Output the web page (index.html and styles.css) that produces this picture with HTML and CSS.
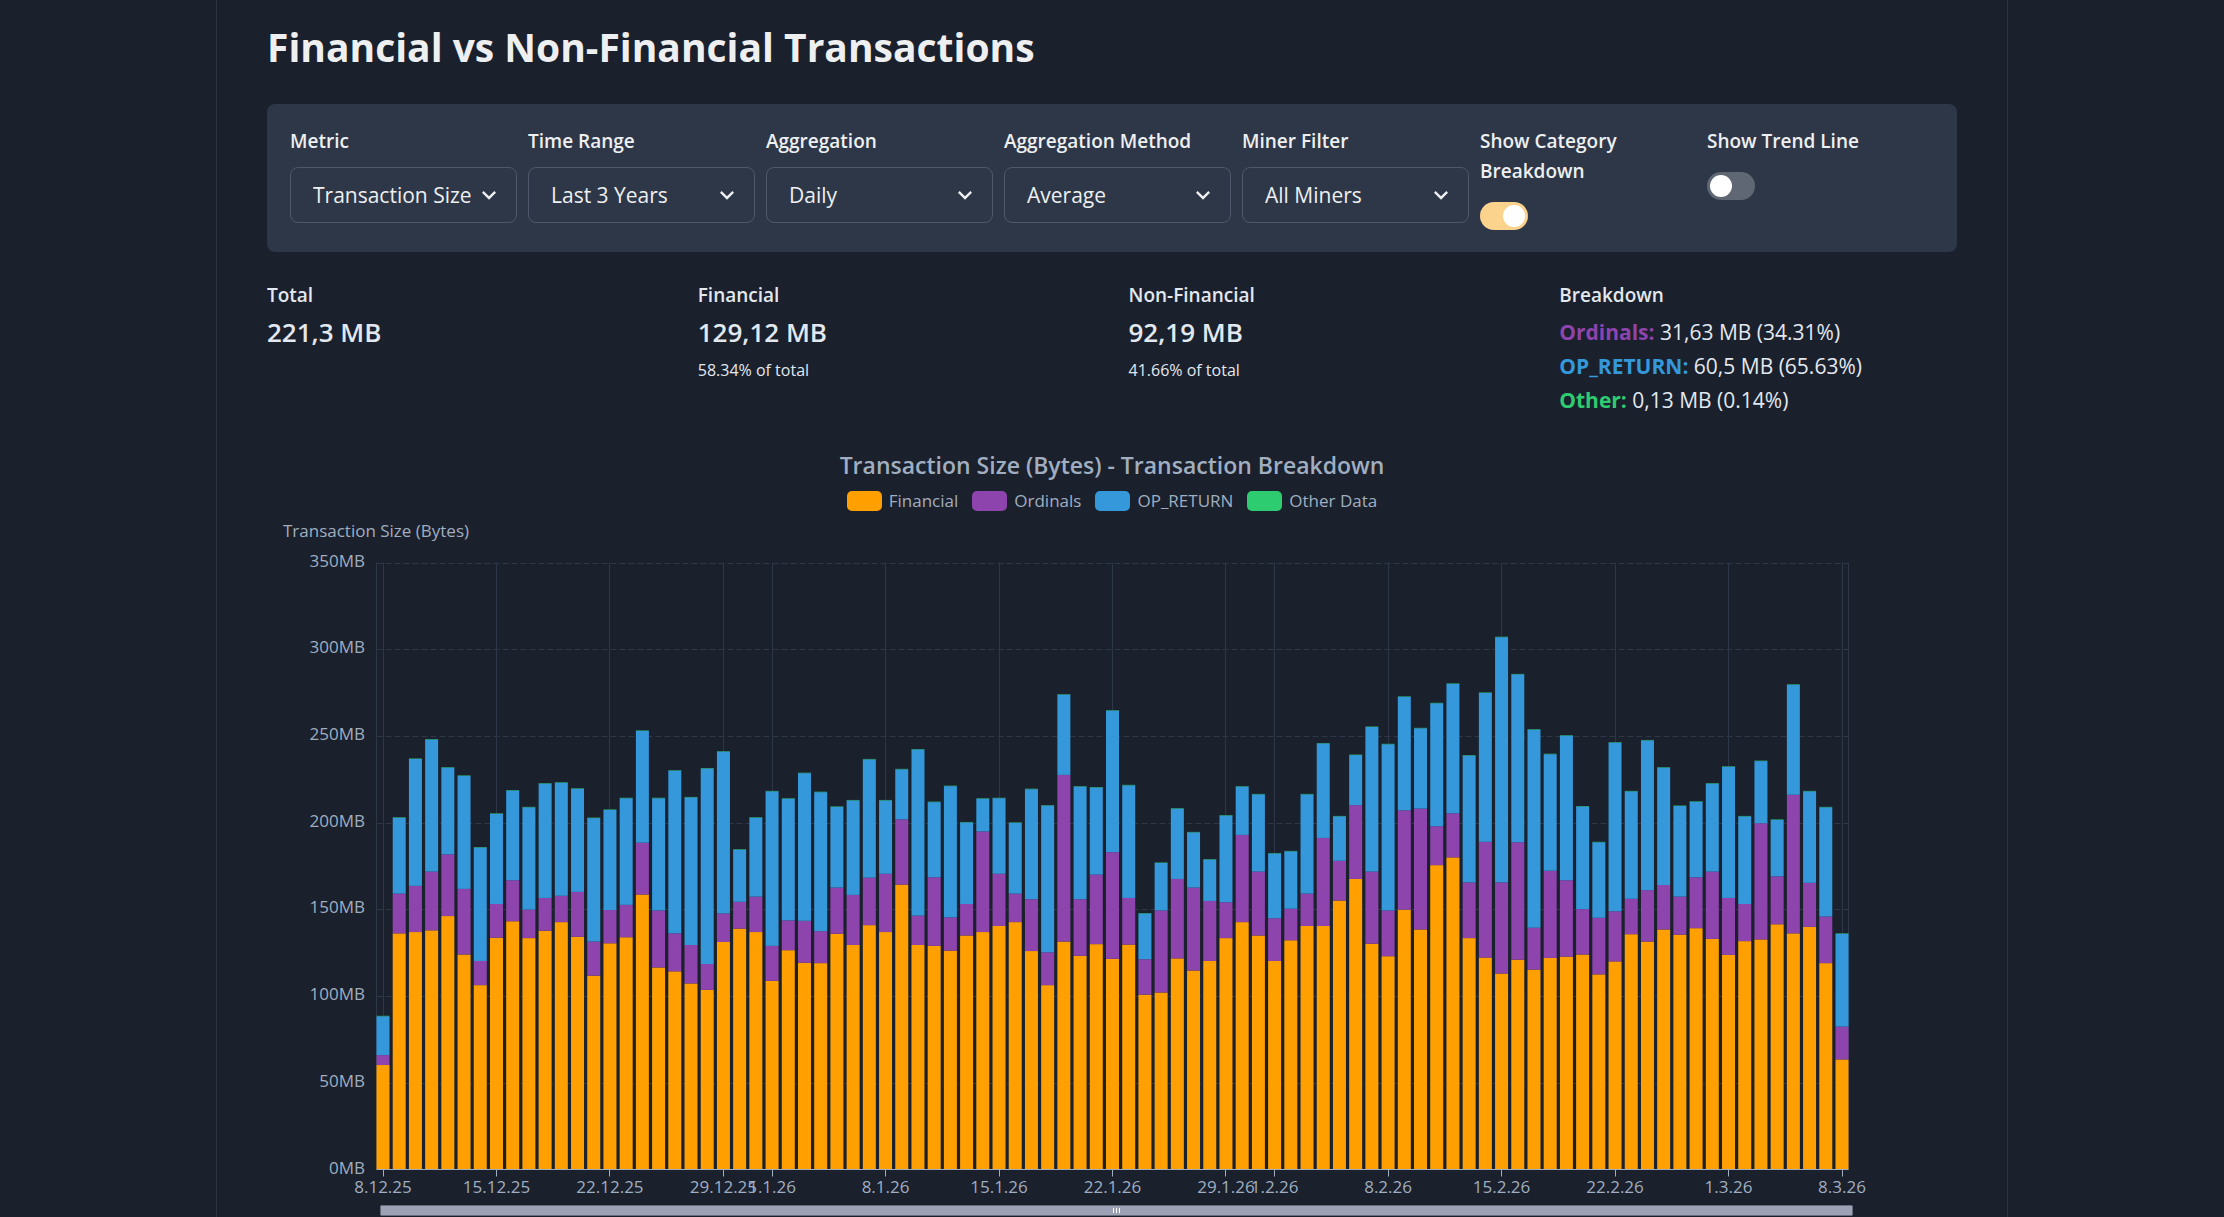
FILE: index.html
```html
<!DOCTYPE html>
<html lang="en">
<head>
<meta charset="utf-8">
<meta name="viewport" content="width=device-width, initial-scale=1">
<title>Financial vs Non-Financial Transactions</title>
<link rel="stylesheet" href="styles.css">
</head>
<body>
<main class="page">
  <h1 class="page-title">Financial vs Non-Financial Transactions</h1>

  <form class="controls">
    <div class="field">
      <label class="field-label" for="metric">Metric</label>
      <div class="select-wrap">
        <select class="select" id="metric"><option>Transaction Size</option><option>Transaction Count</option></select>
        <svg class="chevron" viewBox="0 0 24 24" aria-hidden="true"><path d="M16.59 8.59 12 13.17 7.41 8.59 6 10l6 6 6-6z"/></svg>
      </div>
    </div>
    <div class="field">
      <label class="field-label" for="range">Time Range</label>
      <div class="select-wrap">
        <select class="select" id="range"><option>Last 3 Years</option></select>
        <svg class="chevron" viewBox="0 0 24 24" aria-hidden="true"><path d="M16.59 8.59 12 13.17 7.41 8.59 6 10l6 6 6-6z"/></svg>
      </div>
    </div>
    <div class="field">
      <label class="field-label" for="aggregation">Aggregation</label>
      <div class="select-wrap">
        <select class="select" id="aggregation"><option>Daily</option></select>
        <svg class="chevron" viewBox="0 0 24 24" aria-hidden="true"><path d="M16.59 8.59 12 13.17 7.41 8.59 6 10l6 6 6-6z"/></svg>
      </div>
    </div>
    <div class="field">
      <label class="field-label" for="method">Aggregation Method</label>
      <div class="select-wrap">
        <select class="select" id="method"><option>Average</option></select>
        <svg class="chevron" viewBox="0 0 24 24" aria-hidden="true"><path d="M16.59 8.59 12 13.17 7.41 8.59 6 10l6 6 6-6z"/></svg>
      </div>
    </div>
    <div class="field">
      <label class="field-label" for="miner">Miner Filter</label>
      <div class="select-wrap">
        <select class="select" id="miner"><option>All Miners</option></select>
        <svg class="chevron" viewBox="0 0 24 24" aria-hidden="true"><path d="M16.59 8.59 12 13.17 7.41 8.59 6 10l6 6 6-6z"/></svg>
      </div>
    </div>
    <div class="field">
      <label class="field-label" for="breakdown">Show Category Breakdown</label>
      <input class="switch" id="breakdown" type="checkbox" role="switch" checked>
    </div>
    <div class="field">
      <label class="field-label" for="trend">Show Trend Line</label>
      <input class="switch" id="trend" type="checkbox" role="switch">
    </div>
  </form>

  <section class="stats">
    <dl class="stat">
      <dt class="stat-label">Total</dt>
      <dd class="stat-value">221,3 MB</dd>
    </dl>
    <dl class="stat">
      <dt class="stat-label">Financial</dt>
      <dd class="stat-value">129,12 MB</dd>
      <dd class="stat-help">58.34% of total</dd>
    </dl>
    <dl class="stat">
      <dt class="stat-label">Non-Financial</dt>
      <dd class="stat-value">92,19 MB</dd>
      <dd class="stat-help">41.66% of total</dd>
    </dl>
    <dl class="stat">
      <dt class="stat-label">Breakdown</dt>
      <dd class="stat-row"><strong class="ordinals">Ordinals:</strong> 31,63 MB (34.31%)</dd>
      <dd class="stat-row"><strong class="op-return">OP_RETURN:</strong> 60,5 MB (65.63%)</dd>
      <dd class="stat-row"><strong class="other">Other:</strong> 0,13 MB (0.14%)</dd>
    </dl>
  </section>

  <section class="chart">
    <h2 class="chart-title">Transaction Size (Bytes) - Transaction Breakdown</h2>
    <div class="legend">
      <button class="legend-item" type="button"><span class="swatch swatch-financial"></span>Financial</button>
      <button class="legend-item" type="button"><span class="swatch swatch-ordinals"></span>Ordinals</button>
      <button class="legend-item" type="button"><span class="swatch swatch-op-return"></span>OP_RETURN</button>
      <button class="legend-item" type="button"><span class="swatch swatch-other"></span>Other Data</button>
    </div>
    <svg class="plot" id="plot" role="img" aria-label="Daily transaction size by category"></svg>
  </section>
</main>
<script src="chart.js"></script>
</body>
</html>
```

FILE: styles.css
```css
* {
  box-sizing: border-box;
}

body {
  margin: 0;
  background: #1a202c;
  color: #eeeff0;
  font-family: "Open Sans", "Noto Sans", sans-serif;
  font-size: 22px;
}

.page {
  max-width: 1792px;
  margin: 0 auto;
  padding: 20px 50px 0;
  border-left: 1px solid #2d3340;
  border-right: 1px solid #2d3340;
}

.page-title {
  margin: 0 0 30px;
  font-size: 39px;
  font-weight: 700;
  line-height: 54px;
}

.controls {
  display: grid;
  grid-template-columns: repeat(5, 227fr) 216fr 227fr;
  gap: 11px;
  padding: 22px 23px;
  border-radius: 8px;
  background: #2d3748;
}

.field {
  display: flex;
  flex-direction: column;
  align-items: flex-start;
  min-width: 0;
}

.field-label {
  margin-bottom: 11px;
  font-size: 19px;
  font-weight: 600;
  line-height: 30px;
}

.select-wrap {
  display: grid;
  grid-template-columns: minmax(0, 1fr);
  align-items: center;
  width: 100%;
}

.select {
  grid-area: 1 / 1;
  width: 100%;
  height: 56px;
  padding: 0 40px 0 22px;
  border: 1px solid #4e586a;
  border-radius: 8px;
  background: transparent;
  color: inherit;
  font-family: inherit;
  font-size: 21px;
  appearance: none;
}

.select option {
  background: #2d3748;
}

.chevron {
  grid-area: 1 / 1;
  justify-self: end;
  width: 28px;
  height: 28px;
  margin-right: 14px;
  fill: currentColor;
  pointer-events: none;
}

.switch {
  width: 48px;
  height: 28px;
  margin: 5px 0 0;
  padding: 3px;
  border-radius: 14px;
  background: #5f6774;
  appearance: none;
}

.switch::before {
  content: "";
  display: block;
  width: 22px;
  height: 22px;
  border-radius: 50%;
  background: #fff;
}

.switch:checked {
  background: #fbd38d;
}

.switch:checked::before {
  margin-left: auto;
}

.stats {
  display: grid;
  grid-template-columns: repeat(4, 1fr);
  gap: 33px;
  margin-top: 28px;
  color: #e2e8f0;
}

.stat,
.stat dd {
  margin: 0;
}

.stat-label {
  font-size: 19px;
  font-weight: 600;
  line-height: 30px;
}

.stat-value {
  font-size: 26px;
  font-weight: 600;
  line-height: 44px;
}

.stat-help {
  font-size: 16px;
  line-height: 32px;
}

.stat-row {
  font-size: 21px;
  line-height: 34px;
}

.stat-label + .stat-row {
  padding-top: 5px;
}

.ordinals {
  color: #8e44ad;
}

.op-return {
  color: #3498db;
}

.other {
  color: #2ecc71;
}

.chart {
  margin-top: 31px;
  color: #a0aec0;
}

.chart-title {
  margin: 0;
  font-size: 23px;
  font-weight: 600;
  line-height: 34px;
  text-align: center;
}

.legend {
  display: flex;
  justify-content: center;
  gap: 14px;
  padding-top: 8px;
}

.legend-item {
  display: flex;
  align-items: center;
  gap: 7px;
  height: 22px;
  padding: 0;
  border: 0;
  background: none;
  color: inherit;
  font-family: inherit;
  font-size: 17px;
  line-height: 20px;
}

.swatch {
  width: 35px;
  height: 20px;
  border-radius: 5px;
}

.swatch-financial {
  background: #ffa000;
}

.swatch-ordinals {
  background: #8e44ad;
}

.swatch-op-return {
  background: #3498db;
}

.swatch-other {
  background: #2ecc71;
}

.plot {
  display: block;
  width: 100%;
  height: 705px;
  font-size: 17px;
}

.plot text {
  fill: #a0aec0;
}

.grid-x {
  stroke: #2d3748;
  stroke-width: 1;
}

.grid-y {
  stroke: #2d3748;
  stroke-width: 1;
  stroke-dasharray: 6 3;
}

.axis {
  stroke: #a0aec0;
  stroke-width: 1;
}

.bar-financial {
  fill: #ffa000;
}

.bar-ordinals {
  fill: #8e44ad;
}

.bar-op-return {
  fill: #3498db;
}

.bar-other {
  fill: #2ecc71;
}

.zoom-bar {
  fill: #9ea2b7;
  stroke: #686d7c;
}

.zoom-grip {
  stroke: #fff;
  stroke-width: 1;
}
```

FILE: chart.js
```js
// One entry per day from 8.12.25 to 8.3.26: upper edge of OP_RETURN, Ordinals and
// Financial on the plot scale, where BASE is 0 MB and BASE - SPAN is 350 MB.
const BASE = 1458;
const SPAN = 1406;
const days = [
  [1103, 1193, 1216], [643, 819, 911], [507, 801, 908], [462, 768, 904], [527, 728, 871], [546, 808, 960], [712, 975, 1031],
  [634, 843, 921], [580, 788, 883], [619, 856, 922], [564, 829, 905], [562, 824, 885], [576, 815, 919], [644, 930, 1009],
  [625, 857, 934], [598, 845, 920], [442, 701, 821], [598, 858, 990], [534, 911, 999], [596, 938, 1027], [529, 982, 1042],
  [490, 865, 931], [717, 838, 900], [643, 826, 908], [582, 940, 1021], [599, 881, 950], [540, 882, 979], [584, 906, 980],
  [618, 805, 912], [603, 822, 938], [508, 782, 892], [603, 773, 908], [531, 647, 798], [485, 870, 938], [607, 781, 940],
  [570, 874, 951], [654, 843, 916], [599, 675, 908], [598, 773, 894], [655, 819, 885], [577, 832, 952], [615, 955, 1031],
  [358, 544, 930], [571, 832, 963], [573, 775, 936], [395, 723, 970], [568, 829, 937], [865, 971, 1053], [748, 858, 1048],
  [622, 785, 969], [677, 805, 997], [740, 836, 975], [638, 839, 922], [571, 683, 885], [589, 768, 916], [726, 876, 975],
  [721, 854, 927], [589, 819, 894], [471, 690, 894], [640, 743, 835], [498, 614, 785], [433, 768, 935], [473, 858, 964],
  [363, 626, 856], [436, 622, 902], [378, 663, 753], [333, 633, 735], [499, 793, 922], [354, 699, 967], [225, 793, 1004],
  [311, 700, 972], [439, 898, 995], [496, 766, 968], [453, 788, 965], [617, 855, 960], [700, 875, 1006], [469, 860, 976],
  [582, 831, 913], [464, 811, 930], [527, 799, 902], [616, 826, 914], [606, 781, 899], [564, 768, 924], [525, 829, 961],
  [640, 843, 929], [512, 656, 925], [648, 779, 890], [335, 590, 911], [582, 794, 896], [619, 872, 980], [912, 1127, 1203]
];
const ticks = [
  [0, "8.12.25"], [7, "15.12.25"], [14, "22.12.25"], [21, "29.12.25"], [24, "1.1.26"], [31, "8.1.26"], [38, "15.1.26"],
  [45, "22.1.26"], [52, "29.1.26"], [55, "1.2.26"], [62, "8.2.26"], [69, "15.2.26"], [76, "22.2.26"], [83, "1.3.26"], [90, "8.3.26"]
];

const svg = document.getElementById("plot");

function add(name, attrs, text) {
  const node = document.createElementNS("http://www.w3.org/2000/svg", name);
  for (const key in attrs) node.setAttribute(key, attrs[key]);
  if (text) node.textContent = text;
  svg.appendChild(node);
}

function line(cls, x1, y1, x2, y2) {
  add("line", { class: cls, x1, y1, x2, y2 });
}

function draw() {
  svg.replaceChildren();
  const width = svg.clientWidth;
  const left = 109.5;
  const right = Math.round(width - 109) + 0.5;
  const top = 50.5;
  const bottom = 657.5;
  const barWidth = 13;
  const step = (right - left - barWidth) / (days.length - 1);
  const xOf = i => left + barWidth / 2 + i * step;
  const yOf = v => bottom - (BASE - v) / SPAN * (bottom - top);

  add("text", { x: 109, y: 25, "text-anchor": "middle" }, "Transaction Size (Bytes)");
  for (let mb = 0; mb <= 350; mb += 50) {
    const y = Math.round(bottom - mb / 350 * (bottom - top)) + 0.5;
    if (mb) line("grid-y", left, y, right, y);
    add("text", { x: 98, y: y + 3, "text-anchor": "end" }, mb + "MB");
  }
  line("grid-x", left, top, left, bottom);
  line("grid-x", right, top, right, bottom);
  for (const [i] of ticks) {
    const x = Math.floor(xOf(i)) + 0.5;
    line("grid-x", x, top, x, bottom);
  }

  days.forEach(([op, ord, fin], i) => {
    const x = xOf(i) - barWidth / 2;
    const bar = (cls, from, to) =>
      add("rect", { class: cls, x, y: yOf(to), width: barWidth, height: yOf(from) - yOf(to) });
    bar("bar-financial", BASE, fin);
    bar("bar-ordinals", fin, ord);
    bar("bar-op-return", ord, op);
    bar("bar-other", op, op - 1);
  });

  line("axis", left, bottom, right, bottom);
  for (const [i, label] of ticks) {
    const x = Math.floor(xOf(i)) + 0.5;
    line("axis", x, bottom, x, bottom + 7);
    add("text", { x: xOf(i), y: 681, "text-anchor": "middle" }, label);
  }

  const zoomLeft = left + 4;
  const zoomWidth = right - left;
  add("rect", { class: "zoom-bar", x: zoomLeft, y: 693.5, width: zoomWidth, height: 10, rx: 1 });
  const mid = Math.round(zoomLeft + zoomWidth / 2) - 0.5;
  for (const d of [-3, 0, 3]) line("zoom-grip", mid + d, 696, mid + d, 701);
}

draw();
window.addEventListener("resize", draw);
```
